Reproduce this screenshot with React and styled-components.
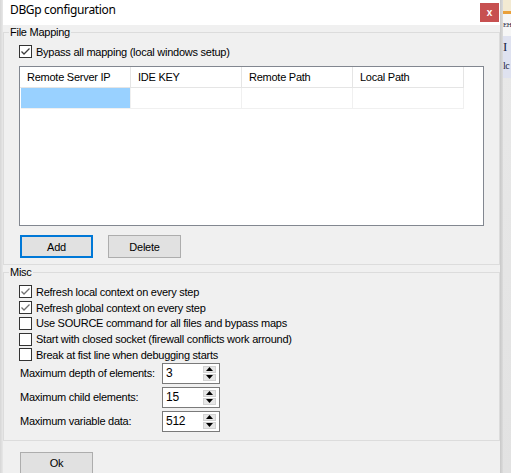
import styled, { createGlobalStyle } from "styled-components";

const Global = createGlobalStyle`
  html, body {
    margin: 0;
    padding: 0;
  }
  body {
    width: 511px;
    height: 473px;
    overflow: hidden;
    background: #e6e6e6;
    font-family: "Liberation Sans", Arial, sans-serif;
  }
`;

const Screen = styled.div`
  display: flex;
  width: 511px;
  height: 473px;
  overflow: hidden;
`;

const LeftEdge = styled.div`
  width: 3px;
  flex: none;
  background: linear-gradient(to right, #d6d6d6, #e8e8e8);
`;

const Window = styled.div`
  width: 497px;
  flex: none;
  background: #f0f0f0;
  display: flex;
  flex-direction: column;
  font-size: 11px;
  letter-spacing: -0.25px;
  color: #000;
`;

const TitleBar = styled.div`
  height: 25px;
  flex: none;
  background: #fff;
  display: flex;
  align-items: flex-start;
  justify-content: space-between;
  padding: 0 1px 0 7px;
  box-sizing: border-box;
`;

const Title = styled.span`
  font-family: "Noto Sans", "Open Sans", sans-serif;
  font-size: 12px;
  line-height: 16px;
  letter-spacing: -0.35px;
  padding-top: 2px;
`;

const CloseButton = styled.div`
  width: 19px;
  height: 19px;
  margin-top: 3px;
  background: #c75050;
  color: #fff;
  font-weight: bold;
  font-size: 10px;
  letter-spacing: 0;
  display: flex;
  align-items: center;
  justify-content: center;
`;

const Group = styled.fieldset`
  margin: ${(p) => p.$top}px 0 0 0;
  padding: 0;
  border: 1px solid #dcdcdc;
  min-width: 0;
`;

const Legend = styled.legend`
  padding: 0 1px;
  margin-left: 5px;
  line-height: 13px;
`;

const GroupBody = styled.div`
  padding: ${(p) => p.$pt}px 15px ${(p) => p.$pb}px 15px;
  display: flex;
  flex-direction: column;
`;

const CheckRow = styled.label`
  display: flex;
  align-items: center;
  gap: 4px;
  height: ${(p) => p.$h}px;
`;

const Box = styled.span`
  width: 13px;
  height: 13px;
  box-sizing: border-box;
  border: 1px solid #333;
  background: #fff;
  flex: none;
  display: flex;
  align-items: center;
  justify-content: center;
`;

const Table = styled.div`
  margin-top: 7px;
  width: 465px;
  height: 160px;
  box-sizing: border-box;
  border: 1px solid #828790;
  background: #fff;
`;

const Row = styled.div`
  display: flex;
  height: ${(p) => p.$h}px;
`;

const HeadCell = styled.div`
  width: 111px;
  box-sizing: border-box;
  border-right: 1px solid #e5e5e5;
  border-bottom: 1px solid #e5e5e5;
  padding-left: 7px;
  display: flex;
  align-items: center;
`;

const Cell = styled.div`
  width: 111px;
  box-sizing: border-box;
  border-right: 1px solid #f0f0f0;
  border-bottom: 1px solid #f0f0f0;
  background: ${(p) => (p.$selected ? "#99d1ff" : "#fff")};
  ${(p) => p.$selected && "margin-left: 1px; width: 110px;"}
`;

const ButtonRow = styled.div`
  display: flex;
  gap: 15px;
  margin-top: 9px;
  padding-left: 1px;
`;

const Button = styled.div`
  width: 73px;
  height: 23px;
  box-sizing: border-box;
  background: #e1e1e1;
  border: ${(p) => (p.$focused ? "2px solid #0078d7" : "1px solid #adadad")};
  display: flex;
  align-items: center;
  justify-content: center;
`;

const SpinList = styled.div`
  display: flex;
  flex-direction: column;
  gap: 3px;
  padding-left: 1px;
`;

const SpinRow = styled.div`
  display: grid;
  grid-template-columns: 142px 58px;
  align-items: center;
  height: 21px;
`;

const SpinBox = styled.div`
  height: 21px;
  box-sizing: border-box;
  border: 1px solid #7a7a7a;
  background: #fff;
  display: flex;
  align-items: center;
  justify-content: space-between;
  padding: 0 3px 0 3px;
  font-size: 12px;
`;

const SpinButtons = styled.div`
  display: flex;
  flex-direction: column;
  gap: 1px;
`;

const SpinButton = styled.div`
  width: 13px;
  height: 7px;
  box-sizing: border-box;
  background: #e6e6e6;
  border: 1px solid #d2d2d2;
  display: flex;
  align-items: center;
  justify-content: center;
`;

const Footer = styled.div`
  padding: 11px 0 0 17px;
`;

const Backdrop = styled.div`
  width: 11px;
  flex: none;
  display: flex;
`;

const Shadow = styled.div`
  width: 3px;
  background: linear-gradient(to right, #c8c8c8, #dcdcdc);
`;

const BackApp = styled.div`
  flex: 1;
  display: flex;
  flex-direction: column;
  overflow: hidden;
  background: linear-gradient(to bottom, #e9e9e9, #e2e2e2);
`;

const Band = styled.div`
  height: ${(p) => p.$h}px;
  flex: none;
  background: ${(p) => p.$bg};
  color: #1c2440;
  font-family: "Liberation Serif", serif;
  font-size: ${(p) => p.$fs || 12}px;
  line-height: ${(p) => p.$lh || p.$h}px;
  letter-spacing: -0.5px;
  white-space: nowrap;
  overflow: hidden;
`;

function Check({ checked, label, h = 16, tone = "#4a4a4a" }) {
  return (
    <CheckRow $h={h}>
      <Box>
        {checked && (
          <svg width="11" height="11" viewBox="0 0 11 11">
            <polyline
              points="1.5,5.5 4,8 9.5,2.5"
              fill="none"
              stroke={tone}
              strokeWidth="1.3"
            />
          </svg>
        )}
      </Box>
      <span>{label}</span>
    </CheckRow>
  );
}

function Spinner({ label, value }) {
  return (
    <SpinRow>
      <span>{label}</span>
      <SpinBox>
        <span>{value}</span>
        <SpinButtons>
          <SpinButton>
            <svg width="7" height="4" viewBox="0 0 7 4">
              <polygon points="0,4 3.5,0 7,4" fill="#000" />
            </svg>
          </SpinButton>
          <SpinButton>
            <svg width="7" height="4" viewBox="0 0 7 4">
              <polygon points="0,0 7,0 3.5,4" fill="#000" />
            </svg>
          </SpinButton>
        </SpinButtons>
      </SpinBox>
    </SpinRow>
  );
}

const columns = ["Remote Server IP", "IDE KEY", "Remote Path", "Local Path"];

export default function App() {
  return (
    <Screen>
      <Global />
      <LeftEdge />
      <Window>
        <TitleBar>
          <Title>DBGp configuration</Title>
          <CloseButton>x</CloseButton>
        </TitleBar>

        <Group $top={1}>
          <Legend>File Mapping</Legend>
          <GroupBody $pt={5} $pb={6}>
            <Check checked label="Bypass all mapping (local windows setup)" h={15} tone="#3c3c3c" />
            <Table>
              <Row $h={21}>
                {columns.map((c) => (
                  <HeadCell key={c}>{c}</HeadCell>
                ))}
              </Row>
              <Row $h={21}>
                <Cell $selected />
                <Cell />
                <Cell />
                <Cell />
              </Row>
            </Table>
            <ButtonRow>
              <Button $focused>Add</Button>
              <Button>Delete</Button>
            </ButtonRow>
          </GroupBody>
        </Group>

        <Group $top={1}>
          <Legend>Misc</Legend>
          <GroupBody $pt={5} $pb={8}>
            <Check checked label="Refresh local context on every step" h={15.75} tone="#707070" />
            <Check checked label="Refresh global context on every step" h={15.75} tone="#707070" />
            <Check label="Use SOURCE command for all files and bypass maps" h={15.75} />
            <Check label="Start with closed socket (firewall conflicts work arround)" h={15.75} />
            <Check label="Break at fist line when debugging starts" h={15.75} />
            <SpinList>
              <Spinner label="Maximum depth of elements:" value="3" />
              <Spinner label="Maximum child elements:" value="15" />
              <Spinner label="Maximum variable data:" value="512" />
            </SpinList>
          </GroupBody>
        </Group>

        <Footer>
          <Button>Ok</Button>
        </Footer>
      </Window>
      <Backdrop>
        <Shadow />
        <BackApp>
          <Band $h={11} $bg="#f3ead2" />
          <Band $h={3} $bg="#eaa03a" />
          <Band $h={22} $bg="#f6f6f6" $fs={7}>
            EH
          </Band>
          <Band $h={22} $bg="#dfe2f0" $fs={13}>
            I
          </Band>
          <Band $h={20} $bg="#dfe2f0" $fs={10} $lh={16}>
            lc
          </Band>
        </BackApp>
      </Backdrop>
    </Screen>
  );
}
